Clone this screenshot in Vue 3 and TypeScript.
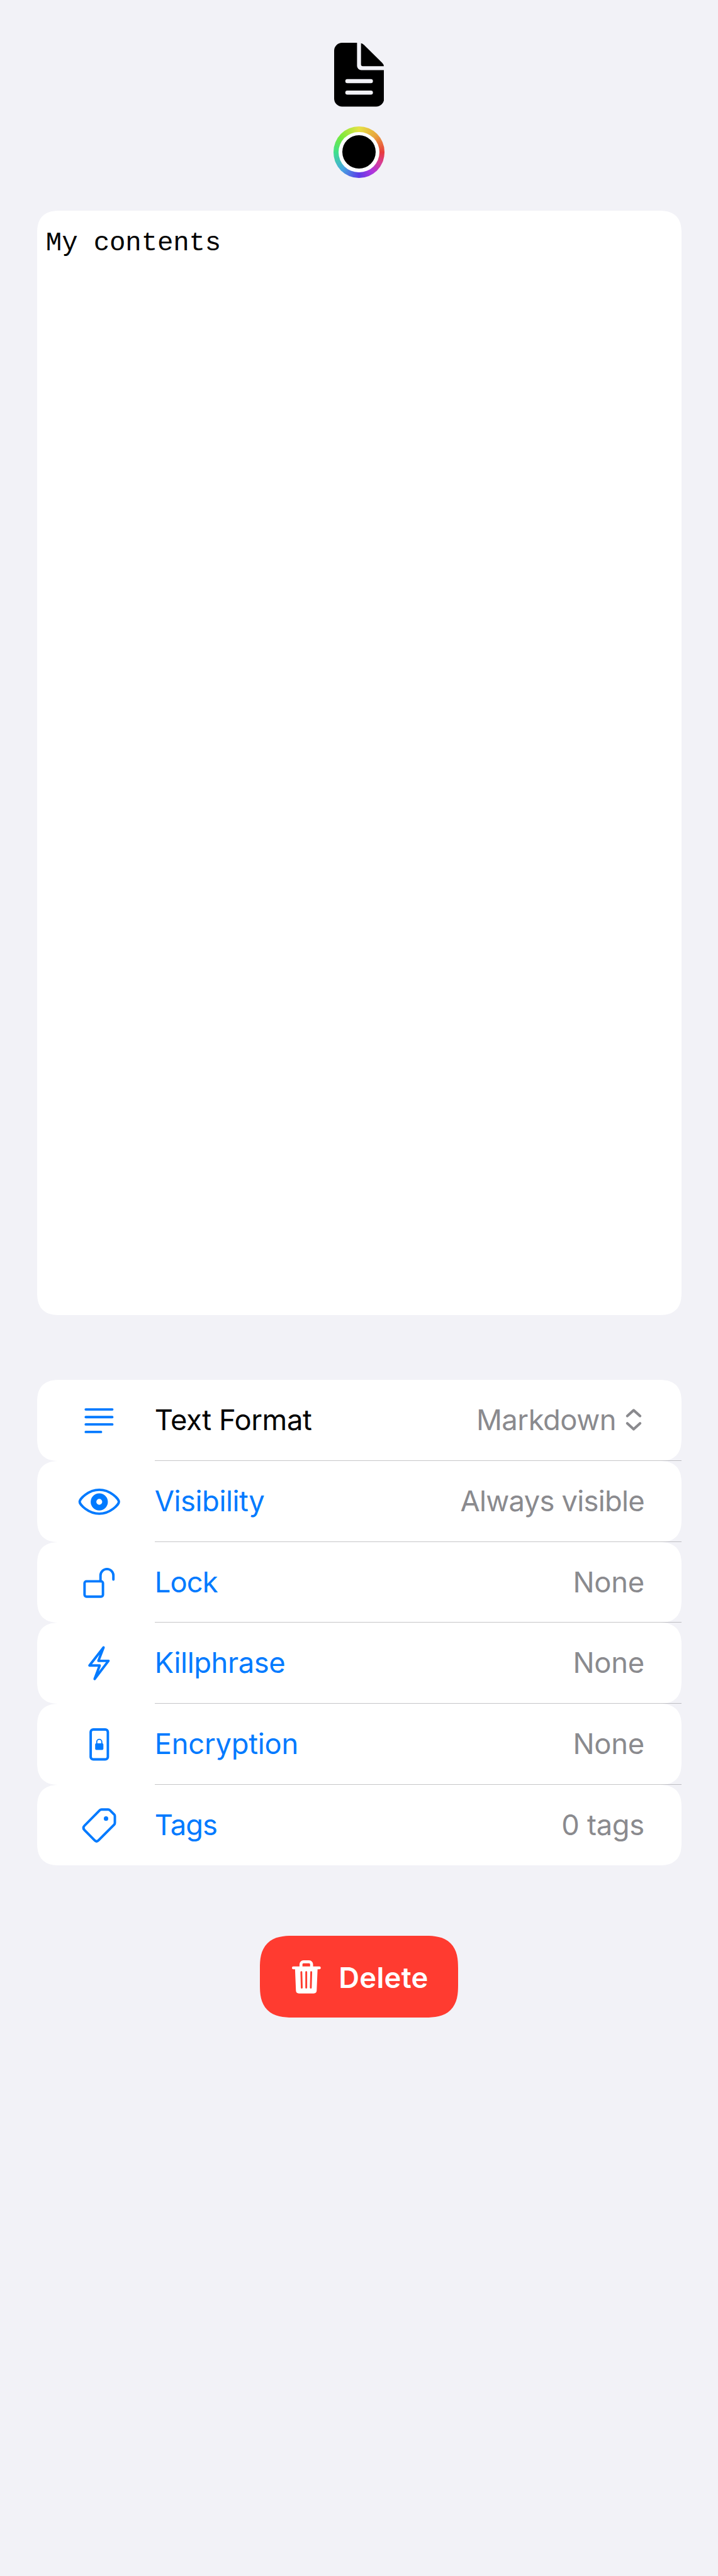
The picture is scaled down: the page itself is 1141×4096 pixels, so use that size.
<script setup lang="ts">
type IconName = 'lines' | 'eye' | 'lock' | 'bolt' | 'phone' | 'tag'

interface Row {
  icon: IconName
  label: string
  value: string
  plain?: boolean
  menu?: boolean
  labelTracking: number
  valueTracking: number
}

const rows: Row[] = [
  { icon: 'lines', label: 'Text Format', value: 'Markdown', plain: true, menu: true, labelTracking: -0.43, valueTracking: -0.48 },
  { icon: 'eye', label: 'Visibility', value: 'Always visible', labelTracking: -0.46, valueTracking: -0.75 },
  { icon: 'lock', label: 'Lock', value: 'None', labelTracking: -0.9, valueTracking: -0.26 },
  { icon: 'bolt', label: 'Killphrase', value: 'None', labelTracking: -0.4, valueTracking: -0.26 },
  { icon: 'phone', label: 'Encryption', value: 'None', labelTracking: -0.25, valueTracking: -0.26 },
  { icon: 'tag', label: 'Tags', value: '0 tags', labelTracking: -1, valueTracking: -0.3 },
]

const tracking = (n: number) => ({ letterSpacing: `calc(var(--u) * ${n})` })
</script>

<template>
  <main class="page">
    <header class="head">
      <svg class="doc" viewBox="544 70 82 104" aria-hidden="true">
        <path d="M581.3 70V107.7a7 7 0 0 0 7 7H625.4V161a13 13 0 0 1-13 13H557a13 13 0 0 1-13-13V83a13 13 0 0 1 13-13Z" />
        <path d="M587.8 70.8Q590 71 592.5 73.4L622.4 102.8Q625 105.6 625 108.2H590.6a2.8 2.8 0 0 1-2.8-2.8Z" />
        <rect class="slot" x="562.2" y="129.3" width="45" height="6.7" rx="3.35" />
        <rect class="slot" x="562.2" y="148" width="45" height="6.7" rx="3.35" />
      </svg>
      <div class="well"><span class="well-ring"><span class="well-colour" /></span></div>
    </header>

    <section class="editor">My contents</section>

    <section class="list">
      <div v-for="row in rows" :key="row.label" class="row" :class="{ plain: row.plain }">
        <svg class="icon" viewBox="112 0 100 132" aria-hidden="true">
          <path v-if="row.icon === 'lines'" d="M140 48.3H183.2M140 60.7H183.2M140 72.7H183.2M140 85H164.8" />
          <template v-else-if="row.icon === 'eye'">
            <path d="M130 66.5C130 62 144 47 162 47S194 62 194 66.5 180 86 162 86 130 71 130 66.5Z" />
            <circle class="pupil" cx="162" cy="66.7" r="9.4" />
          </template>
          <template v-else-if="row.icon === 'lock'">
            <rect x="138" y="64" width="30" height="25" rx="3" />
            <path d="M164 64V54.5A10.5 10.5 0 0 1 185 54.5V61" />
          </template>
          <path v-else-if="row.icon === 'bolt'" d="M169 40.5L146 70H162.7L154.4 92L177 62.4H160.6Z" />
          <template v-else-if="row.icon === 'phone'">
            <rect x="148" y="42" width="28" height="48.8" rx="4.2" />
            <rect class="solid" x="155.3" y="64.6" width="13.4" height="10.8" rx="1.8" />
            <path class="thin" d="M157.9 65.5V62.2a4.1 4.1 0 0 1 8.2 0V65.5" />
          </template>
          <template v-else>
            <path d="M165.6 40.3H176.6Q178.2 40.3 179.3 41.4L186.3 48.4Q187.4 49.5 187.4 51.1V62Q187.4 63.8 186.2 65L160.6 90.6Q157.6 93.6 154.6 90.6L137.6 73.4Q134.6 70 137.6 66.9L162.8 41.5Q164 40.3 165.6 40.3Z" />
            <circle class="solid" cx="173" cy="55" r="3.6" />
          </template>
        </svg>
        <span class="label" :style="tracking(row.labelTracking)">{{ row.label }}</span>
        <span class="value" :style="tracking(row.valueTracking)">{{ row.value }}</span>
        <svg v-if="row.menu" class="chevrons" viewBox="1018 0 29 132" aria-hidden="true">
          <path d="M1022 59L1032.3 49.6L1042.7 59M1022 71L1032.3 80.6L1042.7 71" />
        </svg>
      </div>
    </section>

    <button class="delete" type="button">
      <svg class="trash" viewBox="474 0 52 134" aria-hidden="true">
        <path class="handle" d="M490.7 52V46.5a4 4 0 0 1 4-4H504a4 4 0 0 1 4 4V52" />
        <rect x="476" y="50" width="47" height="4.6" rx="2.3" />
        <path d="M481 53H517.8L516.3 89.5A4.8 4.8 0 0 1 511.5 94H487.3A4.8 4.8 0 0 1 482.5 89.5Z" />
        <path class="cut" d="M491.3 59.3L492 84.7M499.3 59.3V84.7M507.4 59.3L506.7 84.7" />
      </svg>
      <span class="delete-text">Delete</span>
    </button>
  </main>
</template>

<style>
body {
  background: #f2f2f7;
}
</style>

<style scoped>
.page {
  --u: calc(100vw / 1170);
  box-sizing: border-box;
  height: calc(var(--u) * 4200);
  padding: calc(var(--u) * 70) calc(var(--u) * 60) 0;
  display: flex;
  flex-direction: column;
  align-items: stretch;
  overflow: hidden;
  background: #f2f2f7;
  color: #000;
  font-family: Inter, "Liberation Sans", sans-serif;
  font-size: calc(var(--u) * 46.5);
}
.head {
  display: flex;
  flex-direction: column;
  align-items: center;
  gap: calc(var(--u) * 32);
}
.doc {
  display: block;
  width: calc(var(--u) * 82);
  height: calc(var(--u) * 104);
}
.slot {
  fill: #f2f2f7;
}
.well {
  display: grid;
  place-items: center;
  width: calc(var(--u) * 84);
  height: calc(var(--u) * 84);
  border-radius: 50%;
  background: conic-gradient(#e6e245, #e8a53e 45deg, #e83c3c 90deg, #d83c90 115deg, #b035dd 145deg, #5c3ce8 180deg, #45a8e0 225deg, #3fe08c 270deg, #78ea3c 310deg, #e6e245);
}
.well-ring {
  display: grid;
  place-items: center;
  width: calc(var(--u) * 66);
  height: calc(var(--u) * 66);
  border-radius: 50%;
  background: #fff;
}
.well-colour {
  width: calc(var(--u) * 54);
  height: calc(var(--u) * 54);
  border-radius: 50%;
  background: #000;
}
.editor {
  box-sizing: border-box;
  height: calc(var(--u) * 1800);
  margin-top: calc(var(--u) * 54);
  padding: calc(var(--u) * 28) calc(var(--u) * 14.7);
  border-radius: calc(var(--u) * 30);
  background: #fff;
  font: calc(var(--u) * 43.5) / calc(var(--u) * 50) "Liberation Mono", monospace;
  letter-spacing: calc(var(--u) * -0.15);
}
.list {
  margin-top: calc(var(--u) * 106);
}
.row {
  position: relative;
  display: flex;
  align-items: center;
  height: calc(var(--u) * 132);
  padding: 0 calc(var(--u) * 60) 0 calc(var(--u) * 52);
  box-sizing: border-box;
  border-radius: calc(var(--u) * 30);
  background: #fff;
  color: #007aff;
  line-height: calc(var(--u) * 132);
  white-space: nowrap;
}
/* hairline overlaid on the seam between two cells */
.row:not(:last-child)::after {
  content: "";
  position: absolute;
  right: 0;
  bottom: 0;
  left: calc(var(--u) * 192);
  height: 1px;
  background: rgba(60, 60, 67, 0.29);
}
.icon {
  flex: none;
  width: calc(var(--u) * 100);
  height: calc(var(--u) * 132);
  fill: none;
  stroke: #007aff;
  stroke-width: 4;
  stroke-linecap: round;
  stroke-linejoin: round;
}
.icon .solid {
  fill: #007aff;
  stroke: none;
}
.icon .pupil {
  stroke-width: 9.2;
}
.icon .thin {
  stroke-width: 1.9;
}
.label {
  margin-left: calc(var(--u) * 40);
}
.plain .label {
  color: #000;
}
.value {
  margin-left: auto;
  color: #8a8a8e;
}
.chevrons {
  flex: none;
  width: calc(var(--u) * 29);
  height: calc(var(--u) * 132);
  margin: 0 calc(var(--u) * 3) 0 calc(var(--u) * 14);
  fill: none;
  stroke: #8a8a8e;
  stroke-width: 4.2;
  stroke-linecap: round;
  stroke-linejoin: round;
}
.delete {
  display: flex;
  align-items: center;
  align-self: center;
  box-sizing: border-box;
  width: calc(var(--u) * 322);
  height: calc(var(--u) * 134);
  margin-top: calc(var(--u) * 114);
  padding: 0 0 0 calc(var(--u) * 50);
  border: 0;
  border-radius: calc(var(--u) * 42);
  background: #ff3b30;
  color: #fff;
  font: 600 calc(var(--u) * 46.5) / calc(var(--u) * 130) Inter, "Liberation Sans", sans-serif;
  letter-spacing: calc(var(--u) * 0.3);
}
.trash {
  flex: none;
  width: calc(var(--u) * 52);
  height: calc(var(--u) * 134);
  fill: #fff;
}
.trash .handle {
  fill: none;
  stroke: #fff;
  stroke-width: 4.8;
}
.trash .cut {
  fill: none;
  stroke: #ff3b30;
  stroke-width: 3;
  stroke-linecap: round;
}
.delete-text {
  margin-left: calc(var(--u) * 26);
  padding-top: calc(var(--u) * 4);
}
@supports (corner-shape: superellipse(1.4)) {
  .editor,
  .row {
    border-radius: calc(var(--u) * 38);
    corner-shape: superellipse(1.4);
  }
  .delete {
    border-radius: calc(var(--u) * 53);
    corner-shape: superellipse(1.4);
  }
}
</style>
